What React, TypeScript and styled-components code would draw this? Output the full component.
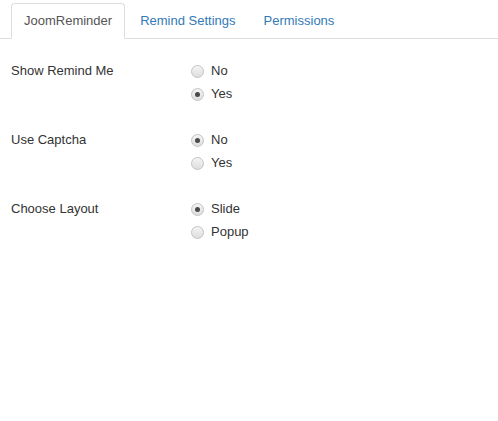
import React, { useState } from "react";
import styled, { createGlobalStyle } from "styled-components";

const GlobalStyle = createGlobalStyle`
  html, body {
    margin: 0;
    padding: 0;
    background: #fff;
  }
  body {
    font-family: "Liberation Sans", Arial, Helvetica, sans-serif;
    font-size: 13px;
    line-height: 18px;
    color: #333;
  }
`;

const Page = styled.div`
  padding-top: 3px;
`;

const Tabs = styled.ul`
  display: flex;
  list-style: none;
  margin: 0;
  padding: 0 0 0 11px;
  border-bottom: 1px solid #ddd;
`;

const Tab = styled.li<{ $active?: boolean }>`
  margin: 0 2px -1px 0;
  padding: 8px 12px;
  line-height: 18px;
  border: 1px solid ${(p) => (p.$active ? "#ddd" : "transparent")};
  border-bottom-color: ${(p) => (p.$active ? "#fff" : "transparent")};
  border-radius: 4px 4px 0 0;
  background: ${(p) => (p.$active ? "#fff" : "transparent")};
  color: ${(p) => (p.$active ? "#555" : "#337ab7")};
  cursor: pointer;
`;

const Form = styled.div`
  padding: 23px 11px 0;
`;

const Group = styled.div`
  display: grid;
  grid-template-columns: 180px 1fr;
  margin-bottom: 28px;
`;

const Label = styled.div`
  color: #333;
`;

const Options = styled.div`
  display: flex;
  flex-direction: column;
  gap: 5px;
`;

const Option = styled.label`
  display: flex;
  align-items: center;
  gap: 7px;
  cursor: pointer;
  color: #333;
`;

const Radio = styled.span<{ $checked?: boolean }>`
  position: relative;
  box-sizing: border-box;
  width: 13px;
  height: 13px;
  border-radius: 50%;
  border: 1px solid #c3c3c3;
  background: linear-gradient(#f4f4f4, #dedede);

  &::after {
    content: "";
    display: ${(p) => (p.$checked ? "block" : "none")};
    position: absolute;
    left: 3px;
    top: 3px;
    width: 5px;
    height: 5px;
    border-radius: 50%;
    background: #4a4a4a;
  }
`;

type Field = { label: string; options: string[] };

const fields: Field[] = [
  { label: "Show Remind Me", options: ["No", "Yes"] },
  { label: "Use Captcha", options: ["No", "Yes"] },
  { label: "Choose Layout", options: ["Slide", "Popup"] },
];

const App: React.FC = () => {
  const [tab, setTab] = useState(0);
  const [values, setValues] = useState<string[]>(["Yes", "No", "Slide"]);

  return (
    <Page>
      <GlobalStyle />
      <Tabs>
        {["JoomReminder", "Remind Settings", "Permissions"].map((t, i) => (
          <Tab key={t} $active={tab === i} onClick={() => setTab(i)}>
            {t}
          </Tab>
        ))}
      </Tabs>
      <Form>
        {fields.map((f, fi) => (
          <Group key={f.label}>
            <Label>{f.label}</Label>
            <Options>
              {f.options.map((o) => (
                <Option
                  key={o}
                  onClick={() =>
                    setValues((v) => v.map((x, i) => (i === fi ? o : x)))
                  }
                >
                  <Radio $checked={values[fi] === o} />
                  {o}
                </Option>
              ))}
            </Options>
          </Group>
        ))}
      </Form>
    </Page>
  );
};

export default App;
